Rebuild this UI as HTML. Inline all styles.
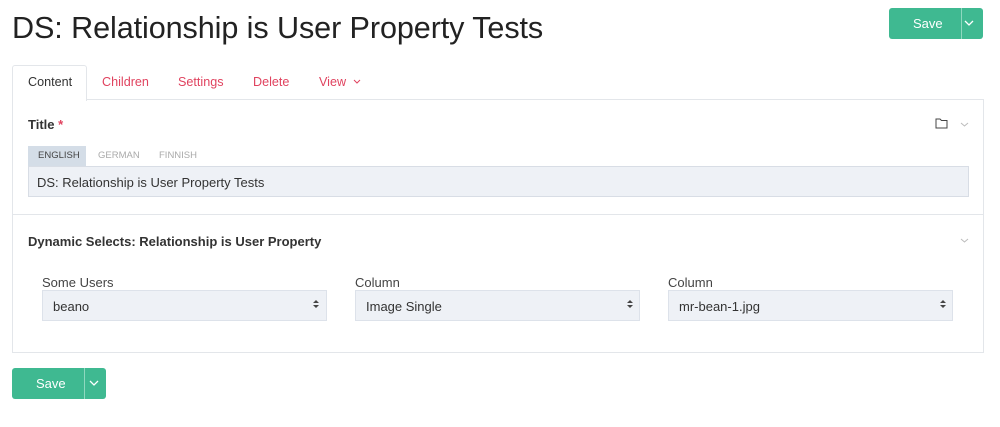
<!DOCTYPE html>
<html><head><style>
*{box-sizing:border-box;margin:0;padding:0}
body{width:1000px;height:427px;background:#fff;font-family:"Liberation Sans",sans-serif;color:#333;position:relative;overflow:hidden}
.a{position:absolute}
h1{position:absolute;left:12px;top:11px;font-size:30.6px;font-weight:normal;color:#222;letter-spacing:-0.1px}
.btn{position:absolute;background:#3fb991;border-radius:3px;color:#fff;font-size:13px}
.btn .s{position:absolute;top:0;height:100%;border-left:1px solid #8fd8bf}
.tab{position:absolute;top:75px;font-size:12.6px;color:#e0435f}
.sel{position:absolute;top:290px;height:31px;background:#eef1f6;border:1px solid #dde2ea;font-size:13px;color:#333;padding:8px 10px}
.lbl{position:absolute;top:275px;font-size:13px;color:#444}
</style></head><body>
<h1>DS: Relationship is User Property Tests</h1>
<div class="btn" style="left:889px;top:8px;width:94px;height:31px"><span class="a" style="left:24px;top:8px">Save</span><div class="s" style="left:72px"></div><svg class="a" style="left:75px;top:12px" width="10" height="6"><path d="M1 1l4 4 4-4" stroke="#fff" fill="none" stroke-width="1.3"/></svg></div>
<div class="a" style="left:12px;top:99px;width:972px;height:254px;border:1px solid #e3e6ea"></div>
<div class="a" style="left:12px;top:65px;width:75px;height:36px;border:1px solid #e3e6ea;border-bottom:none;background:#fff;border-radius:3px 3px 0 0"></div>
<div class="tab" style="left:28px;color:#333">Content</div>
<div class="tab" style="left:102px">Children</div>
<div class="tab" style="left:178px">Settings</div>
<div class="tab" style="left:253px">Delete</div>
<div class="tab" style="left:319px">View <svg width="8" height="5" style="margin-left:3px;vertical-align:2px"><path d="M1 1l3 3 3-3" stroke="#e0435f" fill="none"/></svg></div>
<div class="a" style="left:28px;top:117px;font-size:13px;font-weight:bold;color:#333">Title <span style="color:#e0435f">*</span></div>
<svg class="a" style="left:935px;top:118px" width="13" height="11"><path d="M1 1h4l1.5 1.5H12v7.5H1z" stroke="#444" fill="none"/></svg>
<svg class="a" style="left:960px;top:122px" width="9" height="5"><path d="M1 1l3.5 3 3.5-3" stroke="#bbb" fill="none"/></svg>
<div class="a" style="left:28px;top:146px;width:58px;height:20px;background:#d4dde7"></div>
<div class="a" style="left:38px;top:150px;font-size:9.5px;color:#444">ENGLISH</div>
<div class="a" style="left:98px;top:150px;font-size:9.5px;color:#aaa">GERMAN</div>
<div class="a" style="left:159px;top:150px;font-size:9.5px;color:#aaa">FINNISH</div>
<div class="a" style="left:28px;top:166px;width:941px;height:31px;background:#eef1f6;border:1px solid #d8dde5;font-size:13px;padding:8px 8px;color:#333">DS: Relationship is User Property Tests</div>
<div class="a" style="left:12px;top:214px;width:972px;border-top:1px solid #e3e6ea"></div>
<div class="a" style="left:28px;top:234px;font-size:13px;font-weight:bold;color:#333">Dynamic Selects: Relationship is User Property</div>
<svg class="a" style="left:960px;top:238px" width="9" height="5"><path d="M1 1l3.5 3 3.5-3" stroke="#bbb" fill="none"/></svg>
<div class="lbl" style="left:42px">Some Users</div>
<div class="lbl" style="left:355px">Column</div>
<div class="lbl" style="left:668px">Column</div>
<div class="sel" style="left:42px;width:285px">beano</div>
<div class="sel" style="left:355px;width:285px">Image Single</div>
<div class="sel" style="left:668px;width:285px">mr-bean-1.jpg</div>
<svg class="a" style="left:313px;top:299px" width="6" height="10"><path d="M0 4l3-3 3 3zM0 6l3 3 3-3z" fill="#444"/></svg>
<svg class="a" style="left:627px;top:299px" width="6" height="10"><path d="M0 4l3-3 3 3zM0 6l3 3 3-3z" fill="#444"/></svg>
<svg class="a" style="left:940px;top:299px" width="6" height="10"><path d="M0 4l3-3 3 3zM0 6l3 3 3-3z" fill="#444"/></svg>
<div class="btn" style="left:12px;top:368px;width:94px;height:31px"><span class="a" style="left:24px;top:8px">Save</span><div class="s" style="left:72px"></div><svg class="a" style="left:77px;top:12px" width="10" height="6"><path d="M1 1l4 4 4-4" stroke="#fff" fill="none" stroke-width="1.3"/></svg></div>
</body></html>
